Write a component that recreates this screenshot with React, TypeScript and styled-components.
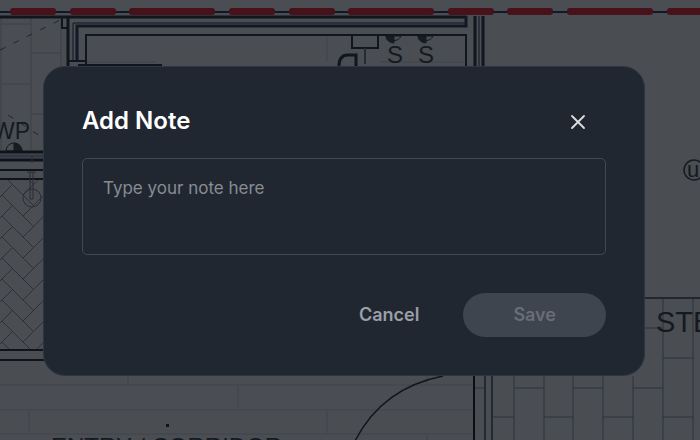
import React, { useState } from "react";
import styled, { createGlobalStyle } from "styled-components";

const GlobalStyle = createGlobalStyle`
  *, *::before, *::after { box-sizing: border-box; }
  body {
    margin: 0;
    background: #4a4d52;
    font-family: Inter, "Liberation Sans", sans-serif;
  }
`;

const Backdrop = styled.main`
  display: grid;
  align-items: start;
  min-height: 100vh;
  padding: 66px 55px 64px 43px;
`;

const PlanSvg = styled.svg`
  position: fixed;
  inset: 0;
  z-index: -1;
  width: 100%;
  height: 100%;
`;

const Dialog = styled.section`
  display: flex;
  flex-direction: column;
  padding: 38px;
  border: 1px solid #2d3742;
  border-radius: 22px;
  background: #212731;
`;

const Header = styled.header`
  display: flex;
  align-items: center;
  justify-content: space-between;
  padding-right: 17px;
  margin-bottom: 21px;
`;

const Title = styled.h2`
  margin: 0;
  color: #fff;
  font-size: 24px;
  font-weight: 600;
  line-height: 32px;
`;

const CloseButton = styled.button`
  display: flex;
  padding: 0;
  border: 0;
  background: none;
  color: #dcdee1;
  cursor: pointer;
`;

const NoteInput = styled.textarea`
  display: block;
  width: 100%;
  height: 97px;
  padding: 16px 20px;
  border: 1px solid #414854;
  border-radius: 5px;
  outline: none;
  resize: none;
  background: transparent;
  color: #e4e6ea;
  font: 400 17px/26px Inter, "Liberation Sans", sans-serif;

  &::placeholder {
    color: #888c93;
    opacity: 1;
  }
`;

const Actions = styled.footer`
  display: flex;
  justify-content: flex-end;
  gap: 12px;
  margin-top: 38px;
`;

const ActionButton = styled.button<{ $filled?: boolean }>`
  height: 44px;
  padding: 0 ${(p) => (p.$filled ? 50 : 32)}px;
  border: 0;
  border-radius: 22px;
  background: ${(p) => (p.$filled ? "#3e454e" : "transparent")};
  color: ${(p) => (p.$filled ? "#686d77" : "#9b9fa8")};
  font: 600 18px/24px Inter, "Liberation Sans", sans-serif;
  cursor: ${(p) => (p.$filled ? "default" : "pointer")};
`;

const wallDashes: [number, number][] = [
  [10, 56], [70, 116], [129, 215], [229, 275], [289, 335],
  [348, 434], [448, 494], [507, 553], [567, 653], [667, 710],
];

function FloorPlan() {
  return (
    <PlanSvg viewBox="0 0 700 440" preserveAspectRatio="xMinYMin slice" aria-hidden="true">
      <defs>
        <pattern id="herringbone" width="42" height="21" x="2" y="6" patternUnits="userSpaceOnUse">
          <path
            d="M0 -21L31.5 10.5M0 0L31.5 31.5M0 21L31.5 52.5M0 -42L31.5 -10.5M21 0L52.5 -31.5M21 21L52.5 -10.5M21 42L52.5 10.5M21 63L52.5 31.5M-21 21L10.5 -10.5M-21 42L10.5 10.5"
            stroke="#2c3138"
            fill="none"
          />
        </pattern>
      </defs>
      <rect width="700" height="440" fill="#4a4d52" />
      <g fill="none" stroke="#3c4248">
        <path d="M1 16V150M31 16V150M61 16V66M1 24H31M31 53H61M1 84H31M31 114H43" />
        <path d="M0 385H474M0 410H474M0 434H474M128 376V385M29 410V434M238 385V410M327 410V434M427 376V385M427 434V440M86 62H156M327 36V62M380 62H465" strokeOpacity="0.55" />
        <path d="M514 376V440M544 376V440M573 376V440M603 376V440M633 376V440M663 298V440M693 298V440M645 328H663M663 358H693M475 388H485M514 388H544M573 388H603M633 388H663M492 417H514M544 417H573M603 417H633M663 417H693" stroke="#2d323a" />
      </g>
      <path d="M0 50L60 20M8 115L43 138" fill="none" stroke="#20262f" strokeDasharray="6 9" />

      <path d="M0 12H700" stroke="#11182a" strokeWidth="2" />
      {wallDashes.map(([from, to]) => (
        <rect key={from} x={from} y="8" width={to - from} height="7" rx="3" fill="#48121b" />
      ))}

      <g fill="none" stroke="#10151e">
        <path d="M0 17H467" strokeWidth="3" />
        <path d="M68 17V66" strokeWidth="3" />
        <path d="M73 62V23H466" />
        <path d="M77 62V26H466V16" stroke="#131827" strokeWidth="3" />
        <path d="M86 66V35H466V66" strokeWidth="2" />
        <path d="M62 17V28H67M68 61H86M78 65H162" strokeWidth="2" />
        <path d="M475 16V66" strokeWidth="3" />
        <path d="M479 16V66" />
        <path d="M483 16V66" strokeWidth="3" />
        <path d="M352 36V48H378V36" strokeWidth="2" />
        <path d="M365 48V64" stroke="#252b32" strokeWidth="2" />
        <path d="M339 66Q339 55 348 55H356V66" strokeWidth="3" />
      </g>

      <g fill="#171c23" stroke="#151b21">
        <path d="M386 36A8 7 0 0 0 401 36Z" fill="none" />
        <path d="M386 36A8 7 0 0 0 394 43V36Z" />
        <path d="M418 36A8 7 0 0 0 433 36Z" fill="none" />
        <path d="M418 36A8 7 0 0 0 426 43V36Z" />
        <path d="M6 151A8 8 0 0 1 22 151Z" fill="none" />
        <path d="M14 143A8 8 0 0 1 22 151H14Z" />
      </g>

      <rect y="180" width="43" height="170" fill="url(#herringbone)" />
      <g fill="none" stroke="#0f141c">
        <path d="M0 152H43" strokeWidth="3" />
        <path d="M0 156H43" stroke="#303740" strokeWidth="3" />
        <path d="M0 160H43" strokeWidth="3" />
        <path d="M0 170H43M0 179H43" strokeWidth="2" />
        <path d="M0 350H43M0 360H44" strokeWidth="2" />
        <path d="M32 155V163M27 172H36M30 172V199H33V172" stroke="#292e35" />
        <circle cx="32" cy="198" r="9" stroke="#292e35" />
      </g>

      <path d="M355 441Q382 388 443 376" fill="none" stroke="#11151c" strokeWidth="1.5" />
      <path d="M474 376V440" stroke="#0b0e13" strokeWidth="2" />
      <path d="M485 376V440M492 376V440" stroke="#252a32" strokeWidth="2" />
      <path d="M645 298H700" stroke="#171c23" strokeWidth="1.5" />
      <circle cx="694" cy="170" r="10" fill="none" stroke="#171b21" strokeWidth="1.5" />
      <rect x="166" y="424" width="3" height="3" fill="#11151b" />

      <g fill="#151a21" fontFamily='"Liberation Sans", Arial, sans-serif' fontSize="24">
        <text x="387" y="63">S</text>
        <text x="418" y="63">S</text>
        <text x="-7" y="139" fontSize="23">WP</text>
        <text x="687" y="177" fontSize="22">u</text>
        <text x="656" y="332" fontSize="29">STE</text>
        <text x="51" y="455">ENTRY / CORRIDOR</text>
      </g>
    </PlanSvg>
  );
}

export default function App() {
  const [note, setNote] = useState("");

  return (
    <>
      <GlobalStyle />
      <Backdrop>
        <FloorPlan />
        <Dialog role="dialog" aria-modal="true" aria-labelledby="note-title">
          <Header>
            <Title id="note-title">Add Note</Title>
            <CloseButton type="button" aria-label="Close">
              <svg width="22" height="22" viewBox="0 0 22 22" fill="none" stroke="currentColor" strokeWidth="1.8" strokeLinecap="round">
                <path d="M5 6L17 18M17 6L5 18" />
              </svg>
            </CloseButton>
          </Header>
          <NoteInput
            aria-labelledby="note-title"
            placeholder="Type your note here"
            value={note}
            onChange={(e) => setNote(e.target.value)}
          />
          <Actions>
            <ActionButton type="button">Cancel</ActionButton>
            <ActionButton type="button" $filled disabled={!note}>Save</ActionButton>
          </Actions>
        </Dialog>
      </Backdrop>
    </>
  );
}
